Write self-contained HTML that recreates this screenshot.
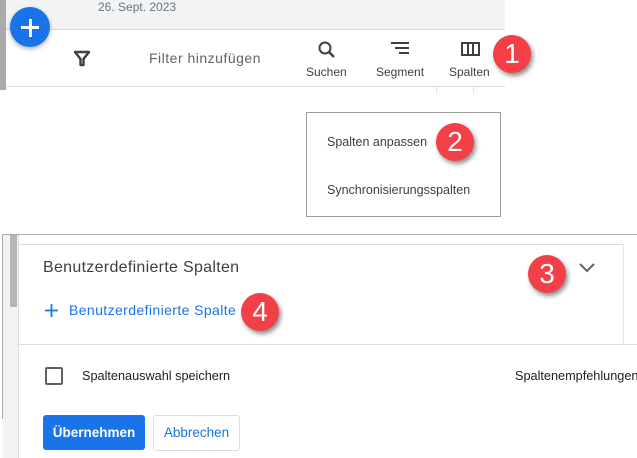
<!DOCTYPE html>
<html><head><style>
body{margin:0;width:637px;height:458px;position:relative;overflow:hidden;background:#fff;font-family:"Liberation Sans",Arial,sans-serif;}
.a{position:absolute;white-space:nowrap}
.badge{position:absolute;width:38px;height:38px;border-radius:50%;background:#f24046;color:#fff;font-size:28px;text-align:center;line-height:38px;box-shadow:2px 3px 5px rgba(0,0,0,.45);}
</style></head><body>
<!-- top -->
<div class="a" style="left:0;top:0;width:505px;height:29px;background:#f1f3f4;border-bottom:1px solid #dadce0"></div>
<div class="a" style="left:0;top:0;width:6px;height:90px;background:#aaa"></div>
<div class="a" style="left:98px;top:0;font-size:12px;color:#70757a">26. Sept. 2023</div>
<div class="a" style="left:6px;top:86px;width:499px;height:1px;background:#dadce0"></div>
<div class="a" style="left:436px;top:87px;width:1px;height:6px;background:#e0e0e0"></div>
<div class="a" style="left:473px;top:87px;width:1px;height:6px;background:#e0e0e0"></div>
<div class="a" style="left:10px;top:7px;width:40px;height:40px;border-radius:50%;background:#1a73e8;box-shadow:0 2px 5px rgba(0,0,0,.3)"></div>
<div class="a" style="left:21px;top:26px;width:18px;height:3px;background:#fff"></div>
<div class="a" style="left:28.5px;top:18.5px;width:3px;height:18px;background:#fff"></div>
<svg class="a" style="left:73px;top:49px" width="18" height="18" viewBox="0 0 18 18"><path d="M2 3h14l-5.5 7v6h-3v-6z" fill="none" stroke="#3c4043" stroke-width="2.4" stroke-linejoin="round"/></svg>
<div class="a" style="left:149px;top:50px;font-size:14px;letter-spacing:0.5px;color:#5f6368">Filter hinzufügen</div>
<svg class="a" style="left:317px;top:40px" width="20" height="20" viewBox="0 0 20 20"><circle cx="8" cy="8" r="5.5" fill="none" stroke="#3c4043" stroke-width="2"/><path d="M12 12l5 5" stroke="#3c4043" stroke-width="2.4"/></svg>
<div class="a" style="left:306px;top:65px;font-size:12px;color:#3c4043">Suchen</div>
<svg class="a" style="left:390px;top:41px" width="20" height="16" viewBox="0 0 20 16"><path d="M1 2h18M5 7h14M9 12h10" stroke="#3c4043" stroke-width="2"/></svg>
<div class="a" style="left:376px;top:65px;font-size:12px;color:#3c4043">Segment</div>
<svg class="a" style="left:461px;top:42px" width="20" height="14" viewBox="0 0 20 14"><rect x="1" y="1" width="17" height="12" fill="none" stroke="#3c4043" stroke-width="2"/><path d="M7 1v12M12 1v12" stroke="#3c4043" stroke-width="2"/></svg>
<div class="a" style="left:449px;top:65px;font-size:12px;color:#3c4043">Spalten</div>
<div class="badge" style="left:493px;top:35px">1</div>
<!-- menu -->
<div class="a" style="left:306px;top:112px;width:193px;height:103px;border:1px solid #9e9e9e;background:#fff"></div>
<div class="a" style="left:327px;top:135px;font-size:12.5px;color:#3c4043">Spalten anpassen</div>
<div class="a" style="left:327px;top:183px;font-size:12.5px;color:#3c4043">Synchronisierungsspalten</div>
<div class="badge" style="left:436px;top:123px">2</div>
<!-- bottom -->
<div class="a" style="left:2px;top:234px;width:635px;height:1px;background:#aaa"></div>
<div class="a" style="left:2px;top:234px;width:1px;height:185px;background:#aaa"></div>
<div class="a" style="left:12px;top:419px;width:1px;height:39px;background:#ccc"></div>
<div class="a" style="left:3px;top:235px;width:15px;height:223px;background:#f1f3f4"></div>
<div class="a" style="left:10px;top:235px;width:7px;height:72px;background:#b5b5b5"></div>
<div class="a" style="left:18px;top:235px;width:1px;height:223px;background:#dadce0"></div>
<div class="a" style="left:19px;top:244px;width:605px;height:1px;background:#dadce0"></div>
<div class="a" style="left:623px;top:244px;width:1px;height:100px;background:#e8e8e8"></div>
<div class="a" style="left:19px;top:344px;width:618px;height:1px;background:#dadce0"></div>
<div class="a" style="left:43px;top:259px;font-size:16px;letter-spacing:0.3px;color:#3c4043">Benutzerdefinierte Spalten</div>
<svg class="a" style="left:578px;top:262px" width="18" height="12" viewBox="0 0 18 12"><path d="M2 2l7 7 7-7" fill="none" stroke="#5f6368" stroke-width="2"/></svg>
<div class="badge" style="left:528px;top:255px">3</div>
<svg class="a" style="left:44px;top:303px" width="15" height="15" viewBox="0 0 15 15"><path d="M7.5 1v13M1 7.5h13" stroke="#1a73e8" stroke-width="1.8"/></svg>
<div class="a" style="left:69px;top:302px;font-size:14px;letter-spacing:0.4px;color:#1a73e8">Benutzerdefinierte Spalte</div>
<div class="badge" style="left:241px;top:293px">4</div>
<div class="a" style="left:45px;top:367px;width:14px;height:14px;border:2px solid #5f6368;border-radius:2px"></div>
<div class="a" style="left:82px;top:369px;font-size:12.7px;color:#202124">Spaltenauswahl speichern</div>
<div class="a" style="left:515px;top:369px;font-size:12.7px;color:#202124">Spaltenempfehlungen</div>
<div class="a" style="left:43px;top:415px;width:102px;height:35px;background:#1a73e8;border-radius:3px;color:#fff;font-size:13.5px;font-weight:bold;text-align:center;line-height:35px">Übernehmen</div>
<div class="a" style="left:153px;top:415px;width:85px;height:34px;border:1px solid #dadce0;border-radius:3px;color:#1a73e8;font-size:13.5px;text-align:center;line-height:34px">Abbrechen</div>
</body></html>
